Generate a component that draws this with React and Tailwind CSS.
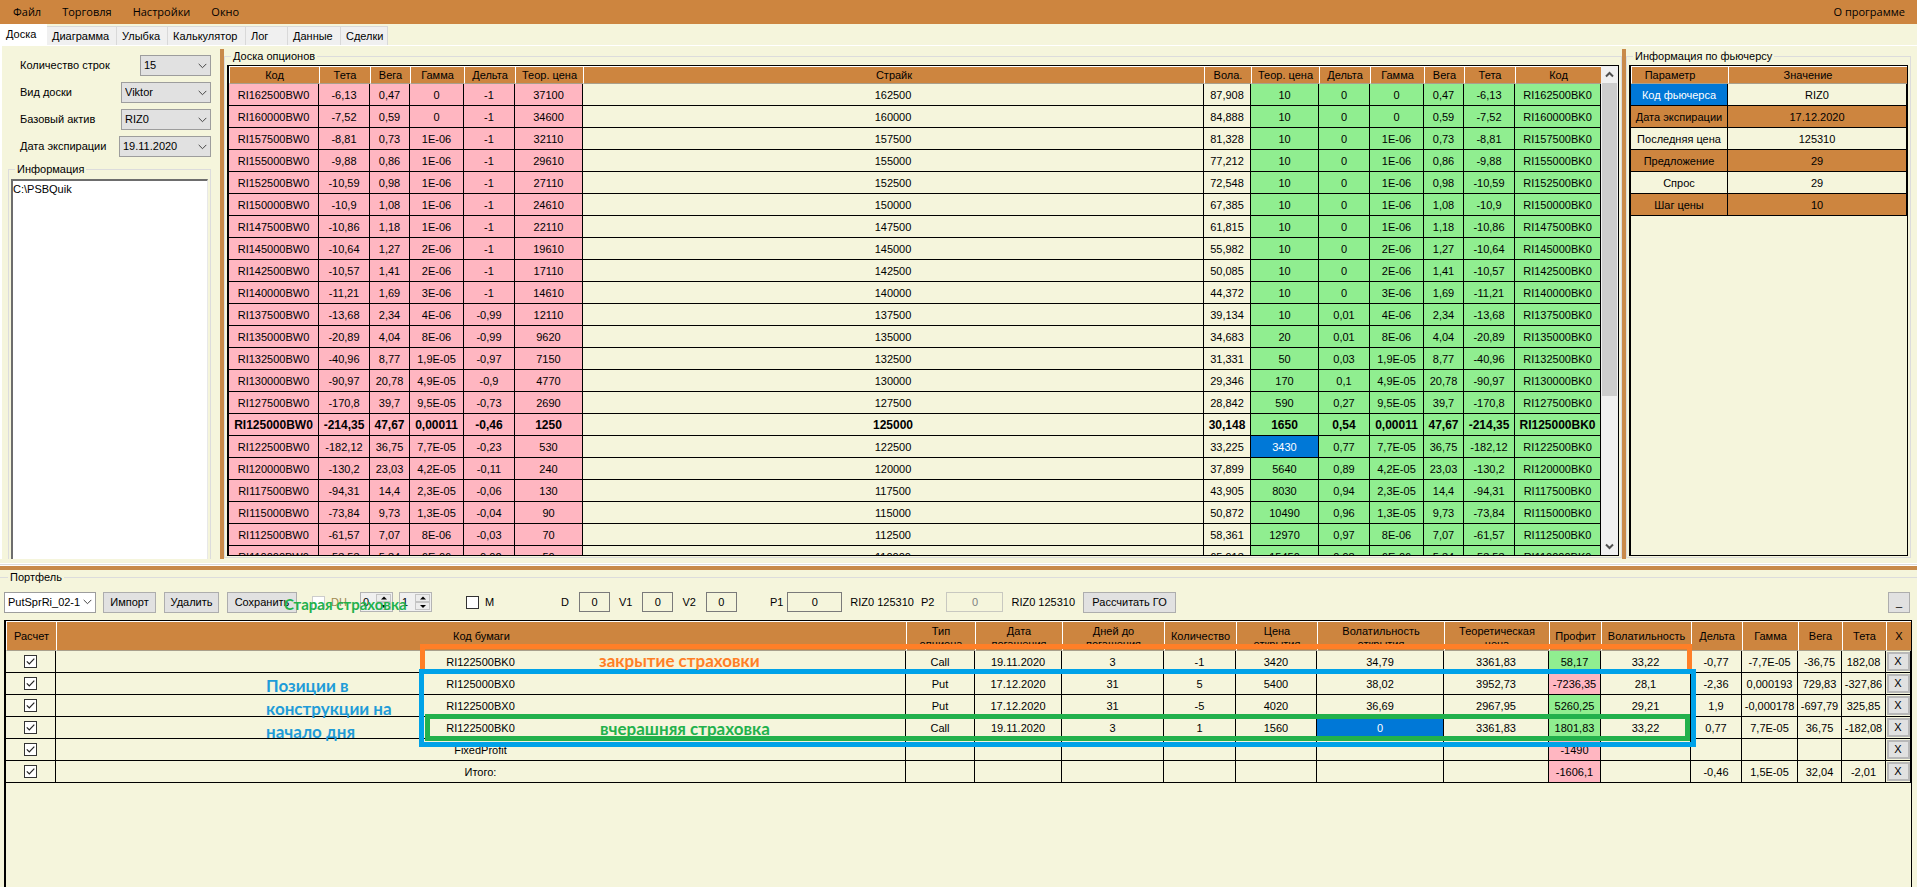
import { clsx } from 'clsx';

const MENU = ['Файл', 'Торговля', 'Настройки', 'Окно'];

const TABS = [
  ['Диаграмма', 'w-[70px]'],
  ['Улыбка', 'w-[51px]'],
  ['Калькулятор', 'w-[78px]'],
  ['Лог', 'w-[42px]'],
  ['Данные', 'w-[53px]'],
  ['Сделки', 'w-[47px]'],
];

const FILTERS = [
  ['rows', 'Количество строк', '15', 'w-[71px]'],
  ['view', 'Вид доски', 'Viktor', 'w-[90px]'],
  ['asset', 'Базовый актив', 'RIZ0', 'w-[90px]'],
  ['expiry', 'Дата экспирации', '19.11.2020', 'w-[92px]'],
];

// strike, theta, vega, gamma, put delta, put price, volatility, call price, call delta
const BOARD = [
  ['162500', '-6,13', '0,47', '0', '-1', '37100', '87,908', '10', '0'],
  ['160000', '-7,52', '0,59', '0', '-1', '34600', '84,888', '10', '0'],
  ['157500', '-8,81', '0,73', '1E-06', '-1', '32110', '81,328', '10', '0'],
  ['155000', '-9,88', '0,86', '1E-06', '-1', '29610', '77,212', '10', '0'],
  ['152500', '-10,59', '0,98', '1E-06', '-1', '27110', '72,548', '10', '0'],
  ['150000', '-10,9', '1,08', '1E-06', '-1', '24610', '67,385', '10', '0'],
  ['147500', '-10,86', '1,18', '1E-06', '-1', '22110', '61,815', '10', '0'],
  ['145000', '-10,64', '1,27', '2E-06', '-1', '19610', '55,982', '10', '0'],
  ['142500', '-10,57', '1,41', '2E-06', '-1', '17110', '50,085', '10', '0'],
  ['140000', '-11,21', '1,69', '3E-06', '-1', '14610', '44,372', '10', '0'],
  ['137500', '-13,68', '2,34', '4E-06', '-0,99', '12110', '39,134', '10', '0,01'],
  ['135000', '-20,89', '4,04', '8E-06', '-0,99', '9620', '34,683', '20', '0,01'],
  ['132500', '-40,96', '8,77', '1,9E-05', '-0,97', '7150', '31,331', '50', '0,03'],
  ['130000', '-90,97', '20,78', '4,9E-05', '-0,9', '4770', '29,346', '170', '0,1'],
  ['127500', '-170,8', '39,7', '9,5E-05', '-0,73', '2690', '28,842', '590', '0,27'],
  ['125000', '-214,35', '47,67', '0,00011', '-0,46', '1250', '30,148', '1650', '0,54'],
  ['122500', '-182,12', '36,75', '7,7E-05', '-0,23', '530', '33,225', '3430', '0,77'],
  ['120000', '-130,2', '23,03', '4,2E-05', '-0,11', '240', '37,899', '5640', '0,89'],
  ['117500', '-94,31', '14,4', '2,3E-05', '-0,06', '130', '43,905', '8030', '0,94'],
  ['115000', '-73,84', '9,73', '1,3E-05', '-0,04', '90', '50,872', '10490', '0,96'],
  ['112500', '-61,57', '7,07', '8E-06', '-0,03', '70', '58,361', '12970', '0,97'],
  ['110000', '-53,53', '5,34', '6E-06', '-0,02', '50', '65,913', '15450', '0,98'],
];

const BOARD_COLS = [
  ['Код', 'w-[90px]'], ['Тета', 'w-[51px]'], ['Вега', 'w-[40px]'], ['Гамма', 'w-[54px]'],
  ['Дельта', 'w-[51px]'], ['Теор. цена', 'w-[68px]'], ['Страйк', ''], ['Вола.', 'w-[47px]'],
  ['Теор. цена', 'w-[68px]'], ['Дельта', 'w-[51px]'], ['Гамма', 'w-[54px]'], ['Вега', 'w-[40px]'],
  ['Тета', 'w-[51px]'], ['Код', 'w-[86px]'],
];

const FUTURES = [
  ['Код фьючерса', 'RIZ0'],
  ['Дата экспирации', '17.12.2020'],
  ['Последняя цена', '125310'],
  ['Предложение', '29'],
  ['Спрос', '29'],
  ['Шаг цены', '10'],
];

const POS_COLS = [
  [['Расчет'], 'w-[50px]'], [['Код бумаги'], ''], [['Тип', 'опциона'], 'w-[69px]'],
  [['Дата', 'погашения'], 'w-[87px]'], [['Дней до', 'погашения'], 'w-[102px]'],
  [['Количество'], 'w-[72px]'], [['Цена', 'открытия'], 'w-[81px]'],
  [['Волатильность', 'открытия'], 'w-[127px]'], [['Теоретическая', 'цена'], 'w-[105px]'],
  [['Профит'], 'w-[52px]'], [['Волатильность'], 'w-[90px]'], [['Дельта'], 'w-[51px]'],
  [['Гамма'], 'w-[56px]'], [['Вега'], 'w-[44px]'], [['Тета'], 'w-[44px]'], [['X'], 'w-[25px]'],
];

const POSITIONS = [
  ['RI122500BK0', 'Call', '19.11.2020', '3', '-1', '3420', '34,79', '3361,83', '58,17', '33,22', '-0,77', '-7,7E-05', '-36,75', '182,08'],
  ['RI125000BX0', 'Put', '17.12.2020', '31', '5', '5400', '38,02', '3952,73', '-7236,35', '28,1', '-2,36', '0,000193', '729,83', '-327,86'],
  ['RI122500BX0', 'Put', '17.12.2020', '31', '-5', '4020', '36,69', '2967,95', '5260,25', '29,21', '1,9', '-0,000178', '-697,79', '325,85'],
  ['RI122500BK0', 'Call', '19.11.2020', '3', '1', '1560', '0', '3361,83', '1801,83', '33,22', '0,77', '7,7E-05', '36,75', '-182,08'],
  ['FixedProfit', '', '', '', '', '', '', '', '-1490', '', '', '', '', ''],
  ['Итого:', '', '', '', '', '', '', '', '-1606,1', '', '-0,46', '1,5E-05', '32,04', '-2,01'],
];

const TABLE = 'w-full table-fixed border-separate border-spacing-0 text-center leading-[13px] whitespace-nowrap';
const TH = 'border-l border-b border-b-[#a9a08c] border-l-white bg-[#cd853f] px-0 pt-px pb-0 font-normal';
const TD = 'h-[22px] overflow-hidden border-r border-b border-black px-0 pt-[2px] pb-0';
const CONTROL_TD = 'h-[22px] overflow-hidden border-r border-b border-black p-0';
const BUTTON = 'h-[21px] flex-none border border-[#adadad] bg-[#e1e1e1] text-center whitespace-nowrap';

function Select({ id, label, value, className, arrow }) {
  return (
    <div className={clsx('grid flex-none items-center', className)}>
      <select id={id} aria-label={label} defaultValue={value} className="col-start-1 row-start-1 h-[21px] w-full appearance-none border border-[#9d9d9d] bg-inherit pl-[3px] leading-[13px]">
        <option>{value}</option>
      </select>
      <svg viewBox="0 0 9 6" className={clsx('pointer-events-none col-start-1 row-start-1 h-[6px] w-[9px] justify-self-end', arrow)} fill="none" stroke="#444">
        <path d="M.7.9 4.5 4.7 8.3.9" />
      </svg>
    </div>
  );
}

function Check({ id, checked = false, disabled = false, label }) {
  return (
    <span className="inline-grid flex-none place-items-center align-middle">
      <input id={id} type="checkbox" aria-label={label} defaultChecked={checked} disabled={disabled}
        className="peer col-start-1 row-start-1 size-[13px] appearance-none border border-[#333] bg-white disabled:border-[#cccccc]" />
      <svg viewBox="0 0 13 13" className="pointer-events-none invisible col-start-1 row-start-1 size-[13px] peer-checked:visible" fill="none" stroke="#222" strokeWidth="1.2">
        <path d="M2.8 6.4 5.3 9 10.3 3.6" />
      </svg>
    </span>
  );
}

function Spin({ label, value }) {
  return (
    <div className="flex h-[20px] w-[33px] flex-none border border-[#b4b4b4] bg-[#f0f0f0] p-px">
      <input aria-label={label} defaultValue={value} disabled className="min-w-0 flex-1 bg-transparent pl-px text-black" />
      <div className="flex w-[15px] flex-col">
        {['M3 4.5h6L6 1.5z', 'M3 2h6L6 5z'].map((d, i) => (
          <button key={d} aria-label={i ? 'Меньше' : 'Больше'} className="flex flex-1 items-center justify-center border border-[#c4c4c4] bg-[#ececec]">
            <svg viewBox="0 0 12 6" className="h-[6px] w-[12px]"><path d={d} fill="#000" /></svg>
          </button>
        ))}
      </div>
    </div>
  );
}

function NumberBox({ id, label, className, labelClass = 'mr-[10px]', disabled = false }) {
  return (
    <>
      <label htmlFor={id} className={clsx('flex-none', labelClass)}>{label}</label>
      <input id={id} defaultValue="0" disabled={disabled}
        className={clsx('h-[20px] flex-none border border-[#7a7a7a] bg-[#f5f5dc] text-center disabled:border-[#c8c8c0] disabled:text-[#808080]', className)} />
    </>
  );
}

function Group({ title, className, children }) {
  return (
    <fieldset className={clsx('flex min-w-0 flex-col border-[#dcdcdc]', className)}>
      <legend className="ml-[4px] h-[14px] px-[2px] leading-[14px]">{title}</legend>
      {children}
    </fieldset>
  );
}

function Board() {
  return (
    <div className="flex h-[491px] border border-l-2 border-black">
      <div className="min-w-0 flex-1 overflow-hidden">
        <table className={TABLE}>
          <thead>
            <tr className="h-[18px]">
              {BOARD_COLS.map(([name, w], i) => (
                <th key={i} className={clsx(TH, 'border-t border-t-white', w)}>{name}</th>
              ))}
            </tr>
          </thead>
          <tbody>
            {BOARD.map(([strike, theta, vega, gamma, dPut, put, vol, call, dCall]) => {
              const cells = [`RI${strike}BW0`, theta, vega, gamma, dPut, put, strike, vol, call, dCall, gamma, vega, theta, `RI${strike}BK0`];
              return (
                <tr key={strike} className={clsx(strike === '125000' && 'text-[12px] font-bold')}>
                  {cells.map((c, i) => (
                    <td key={i} className={clsx(TD,
                      i < 6 && 'bg-[#ffb6c1]',
                      i > 7 && !(i === 8 && strike === '122500') && 'bg-[#90ee90]',
                      i === 8 && strike === '122500' && 'bg-[#0078d7] text-white')}>{c}</td>
                  ))}
                </tr>
              );
            })}
          </tbody>
        </table>
      </div>
      <div className="flex w-[17px] flex-none flex-col bg-[#f0f0f0]">
        <button aria-label="Вверх" className="flex h-[17px] items-center justify-center">
          <svg viewBox="0 0 9 7" className="h-[7px] w-[9px]" fill="none" stroke="#505050" strokeWidth="2"><path d="M1 5.5 4.5 2 8 5.5" /></svg>
        </button>
        <div className="mx-px h-[313px] bg-[#cdcdcd]" />
        <button aria-label="Вниз" className="mt-auto flex h-[17px] items-center justify-center">
          <svg viewBox="0 0 9 7" className="h-[7px] w-[9px]" fill="none" stroke="#505050" strokeWidth="2"><path d="M1 1.5 4.5 5 8 1.5" /></svg>
        </button>
      </div>
    </div>
  );
}

function Futures() {
  return (
    <div className="h-[491px] overflow-hidden border border-l-2 border-black">
      <table className={TABLE}>
        <thead>
          <tr className="h-[18px]">
            <th className={clsx(TH, 'w-[97px] border-t border-t-white')}><div className="pr-5">Параметр</div></th>
            <th className={clsx(TH, 'border-t border-t-white')}><div className="pr-5">Значение</div></th>
          </tr>
        </thead>
        <tbody>
          {FUTURES.map(([name, value], i) => (
            <tr key={name} className={clsx(i % 2 === 1 && 'bg-[#cd853f]')}>
              <td className={clsx(TD, i === 0 && 'bg-[#0078d7] text-white')}>{name}</td>
              <td className={TD}>{value}</td>
            </tr>
          ))}
        </tbody>
      </table>
    </div>
  );
}

function Positions() {
  return (
    <table className={TABLE}>
      <thead>
        <tr className="h-[30px]">
          {POS_COLS.map(([lines, w], i) => (
            <th key={i} className={clsx(TH, 'border-t border-t-white', w, lines.length > 1 && 'align-top')}>
              <div className={clsx(lines.length > 1 && 'h-[21px] overflow-hidden pt-[2px]')}>
                {lines.map((l) => <div key={l}>{l}</div>)}
              </div>
            </th>
          ))}
        </tr>
      </thead>
      <tbody>
        {POSITIONS.map((row, r) => (
          <tr key={r}>
            <td className={CONTROL_TD}><div className="flex justify-center"><Check checked label={`Расчет ${row[0]}`} /></div></td>
            {row.map((c, i) => (
              <td key={i} className={clsx(TD,
                i === 8 && (c.startsWith('-') ? 'bg-[#ffb6c1]' : 'bg-[#90ee90]'),
                i === 6 && r === 3 && 'bg-[#0078d7] text-white')}>{c}</td>
            ))}
            <td className={CONTROL_TD}>
              <button className="mx-auto block h-[19px] w-[23px] border-2 border-[#b8b8b8] bg-[#e1e1e1] leading-[13px]">X</button>
            </td>
          </tr>
        ))}
      </tbody>
    </table>
  );
}

function Toolbar() {
  return (
    <div className="mr-[2px] flex h-6 items-center">
      <Select id="portfolio" label="Портфель" value="PutSprRi_02-1" className="w-[92px] bg-white" arrow="mr-1" />
      <button className={clsx(BUTTON, 'ml-[7px] w-[53px]')}>Импорт</button>
      <button className={clsx(BUTTON, 'ml-2 w-[55px]')}>Удалить</button>
      <div className="relative ml-2 flex-none">
        <button className={clsx(BUTTON, 'w-[70px]')}>Сохранить</button>
        <span className="pointer-events-none absolute top-[4px] left-[57px] z-10 font-[Lato,sans-serif] text-[15px] leading-[16px] font-bold whitespace-nowrap text-[#22b14c]">Старая страховка</span>
      </div>
      <div className="ml-[15px] flex w-[48px] flex-none items-center gap-[6px] text-[#a08a50]">
        <Check id="dh" disabled />
        <label htmlFor="dh">DH</label>
      </div>
      <div className="flex flex-none gap-[6px]">
        <Spin label="Первый параметр" value="0" />
        <Spin label="Второй параметр" value="1" />
      </div>
      <div className="ml-[34px] flex w-[95px] flex-none items-center gap-[6px]">
        <Check id="m" />
        <label htmlFor="m">M</label>
      </div>
      <NumberBox id="d" label="D" className="mr-[9px] w-[31px]" />
      <NumberBox id="v1" label="V1" className="mr-[9px] w-[31px]" />
      <NumberBox id="v2" label="V2" className="mr-[33px] w-[31px]" />
      <NumberBox id="p1" label="P1" labelClass="mr-1" className="mr-[8px] w-[55px]" />
      <span className="mr-[7px] flex-none">RIZ0 125310</span>
      <NumberBox id="p2" label="P2" labelClass="mr-[12px]" className="mr-[8px] w-[57px]" disabled />
      <span className="mr-[8px] flex-none">RIZ0 125310</span>
      <button className={clsx(BUTTON, 'w-[93px]')}>Рассчитать ГО</button>
      <button className={clsx(BUTTON, 'ml-auto w-[22px]')}>_</button>
    </div>
  );
}

const NOTE = 'pointer-events-none absolute font-[Lato,sans-serif] text-[17px] leading-[23px] font-bold whitespace-nowrap';

export default function App() {
  return (
    <div className="flex h-screen flex-col overflow-hidden bg-[#f5f5dc] font-['Liberation_Sans',Arial,sans-serif] text-[11px] leading-[13px] text-black">
      <nav className="flex h-6 flex-none items-center gap-[21px] bg-[#cd853f] pr-[12px] pb-px pl-[13px] font-['Open_Sans',sans-serif]">
        {MENU.map((m) => <button key={m}>{m}</button>)}
        <button className="ml-auto">О программе</button>
      </nav>

      <div role="tablist" className="flex h-[22px] flex-none items-end border-b border-white">
        <button role="tab" aria-selected="true" className="h-[21px] w-[47px] bg-white pb-px pl-[6px] text-left">Доска</button>
        {TABS.map(([t, w]) => (
          <button role="tab" aria-selected="false" key={t} className={clsx('h-[19px] border-t border-r border-[#d9d9d9] bg-[#f0f0f0] pl-[5px] text-left', w)}>{t}</button>
        ))}
      </div>

      <main className="flex flex-none border-l-2 border-white pt-[3px]">
        <div className="flex w-[218px] flex-none flex-col pt-[6px] pr-[9px] pl-[6px]">
          <div className="flex flex-col gap-[6px]">
            {FILTERS.map(([id, label, value, w]) => (
              <div key={id} className="flex items-center justify-between pl-3">
                <label htmlFor={id}>{label}</label>
                <Select id={id} value={value} className={clsx('bg-[#e1e1e1]', w)} arrow="mr-1" />
              </div>
            ))}
          </div>
          <Group title="Информация" className="mt-[5px] flex-1 border border-b-0 px-[2px] pt-[3px]">
            <textarea aria-label="Информация" defaultValue="C:\PSBQuik" className="h-full w-full resize-none border-t-2 border-r border-l-2 border-[#6d6d6d] border-r-[#e8e8e8] bg-white pt-[2px]" />
          </Group>
        </div>
        <div className="w-1 flex-none bg-[#c88a4a]" />
        <Group title="Доска опционов" className="mb-[1px] flex-1 border px-[2px] pt-[2px] pb-[1px]">
          <Board />
        </Group>
        <div className="w-1 flex-none bg-[#c88a4a]" />
        <Group title="Информация по фьючерсу" className="mr-[6px] mb-[1px] w-[285px] flex-none border px-[2px] pt-[2px] pb-[1px]">
          <Futures />
        </Group>
      </main>

      <div className="mt-1 h-[3px] flex-none border-y border-white bg-[#dcdcdc]" />
      <div className="h-1 flex-none bg-[#c88a4a]" />

      <Group title="Портфель" className="flex-1 border-t pr-[5px] pl-1">
        <div className="pt-[6px]">
          <Toolbar />
        </div>
        <div className="relative mt-[6px] min-h-0 flex-1 border border-b-0 border-l-2 border-black">
          <Positions />
          <div className="pointer-events-none absolute top-[23px] right-[219px] left-[414px] h-[30px] border-[5px] border-[#ff7f27]" />
          <div className="pointer-events-none absolute top-[48px] right-[215px] left-[413px] h-[78px] border-[5px] border-[#00a2e8]" />
          <div className="pointer-events-none absolute top-[93px] right-[221px] left-[419px] h-[27px] border-[5px] border-[#22b14c]" />
          <p className={clsx(NOTE, 'top-[28px] left-[593px] text-[#ff7f27]')}>закрытие страховки</p>
          <p className={clsx(NOTE, 'top-[96px] left-[594px] text-[#22b14c]')}>вчерашняя страховка</p>
          <p className={clsx(NOTE, 'top-[53px] left-[260px] text-[#1f9cd8]')}>Позиции в<br />конструкции на<br />начало дня</p>
        </div>
      </Group>
    </div>
  );
}
